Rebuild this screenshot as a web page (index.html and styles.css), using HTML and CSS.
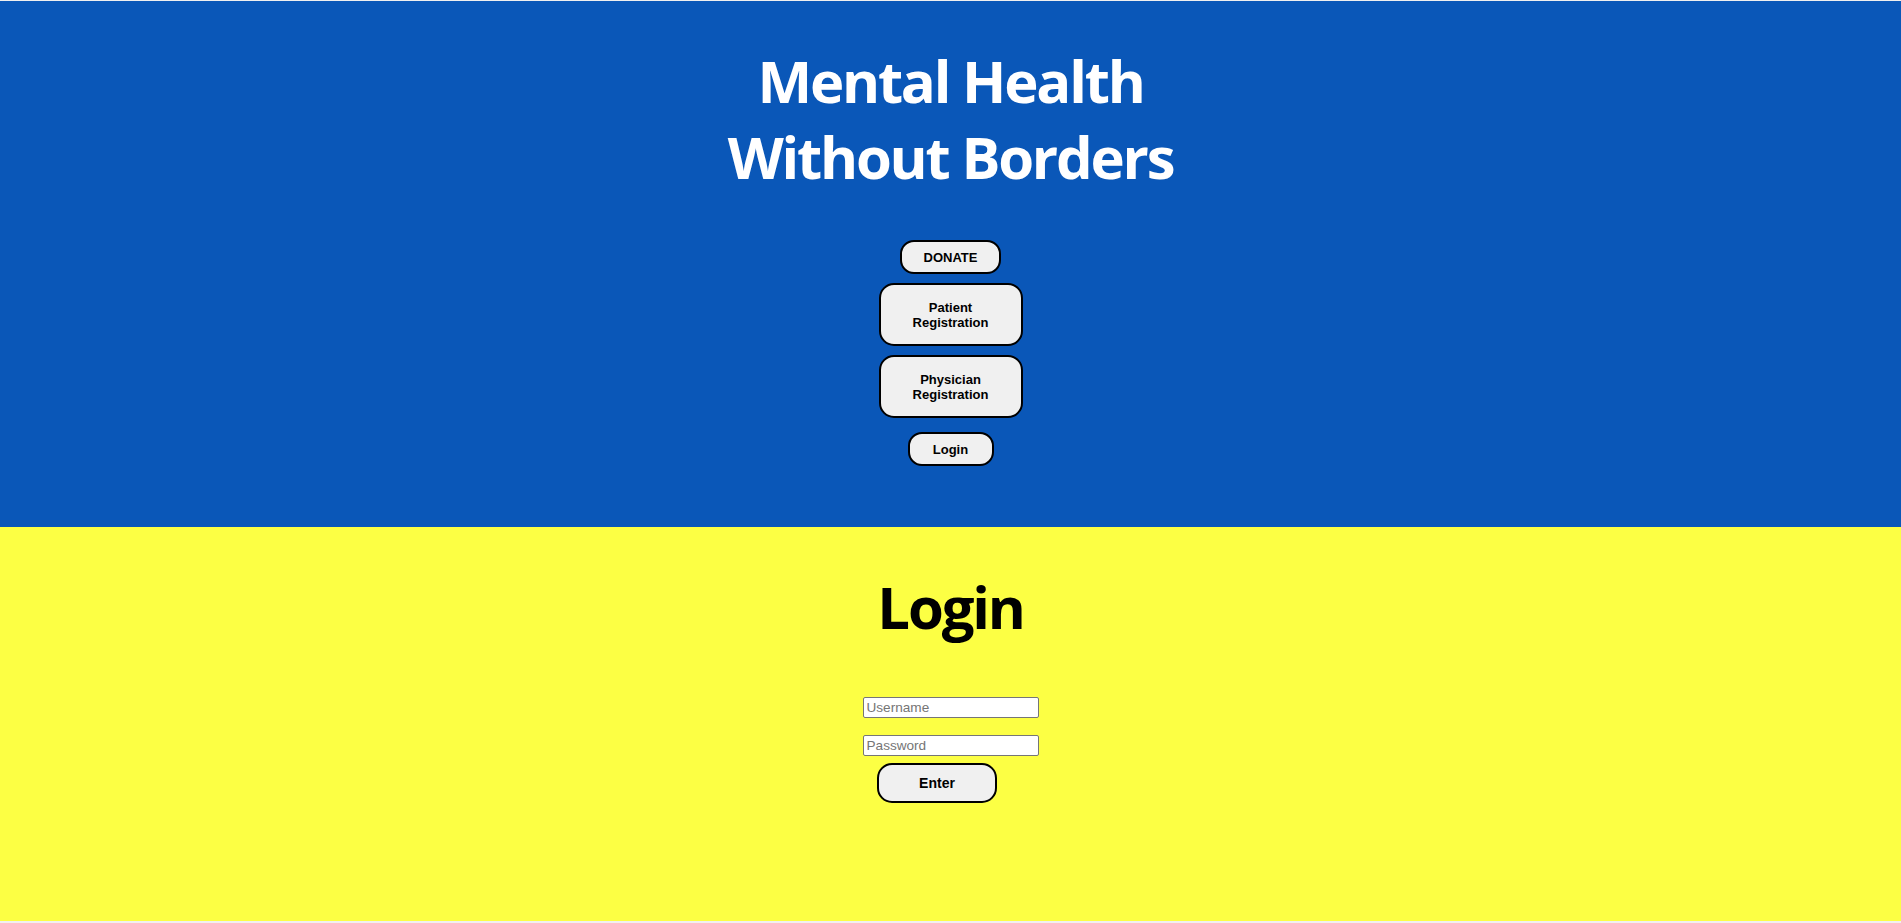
FILE: index.html
```html
<!DOCTYPE html>
<html lang="en">
<head>
<meta charset="utf-8">
<title>Mental Health Without Borders</title>
<link rel="stylesheet" href="styles.css">
</head>
<body>
<header class="hero">
  <h1 class="title">Mental Health<br>Without Borders</h1>
  <nav class="nav">
    <button class="btn btn-small">DONATE</button>
    <button class="btn btn-reg">Patient Registration</button>
    <button class="btn btn-reg">Physician Registration</button>
    <button class="btn btn-small btn-login">Login</button>
  </nav>
</header>
<main class="login">
  <h1 class="title title-dark">Login</h1>
  <form class="form">
    <input class="field" type="text" placeholder="Username">
    <input class="field field-pass" type="password" placeholder="Password">
    <button class="btn btn-enter" type="button">Enter</button>
  </form>
</main>
</body>
</html>
```
FILE: styles.css
```css
html, body {
  margin: 0;
  padding: 0;
}
body {
  background: #f0f0f0;
  padding-top: 1px;
  height: 922px;
  font-family: "Liberation Sans", Arial, sans-serif;
}
.hero {
  background: #0a57b8;
  display: flex;
  flex-direction: column;
  align-items: center;
  padding: 42px 0 61px;
  height: 526px;
  box-sizing: border-box;
}
.title {
  margin: 0;
  font-family: "Open Sans", "Noto Sans", sans-serif;
  font-weight: 700;
  font-size: 58px;
  line-height: 75.5px;
  color: #fff;
  text-align: center;
  letter-spacing: -2.2px;
}
.title-dark {
  color: #000;
}
.nav {
  display: flex;
  flex-direction: column;
  align-items: center;
  margin-top: 46px;
  gap: 9px;
}
.btn {
  font-family: "Liberation Sans", Arial, sans-serif;
  font-weight: 700;
  font-size: 13px;
  line-height: 15px;
  color: #000;
  background: #f0f0f0;
  border: 2px solid #000;
  border-radius: 14px;
  box-sizing: border-box;
  cursor: pointer;
}
.btn-small {
  height: 34px;
  padding: 0 22px;
}
.btn-reg {
  width: 144px;
  height: 63px;
  padding: 0 30px;
  border-radius: 15px;
}
.btn-login {
  margin-top: 5px;
  width: 86px;
  padding: 0;
}
.login {
  background: #fcff44;
  display: flex;
  flex-direction: column;
  align-items: center;
  padding-top: 42px;
  height: 394px;
  box-sizing: border-box;
}
.form {
  display: flex;
  flex-direction: column;
  align-items: center;
  margin-top: 52px;
}
.field {
  width: 176px;
  height: 21px;
  box-sizing: border-box;
  border: 1px solid #767676;
  border-radius: 2px;
  padding: 1px 3px;
  font-family: "Liberation Sans", Arial, sans-serif;
  font-size: 13.6px;
  background: #fff;
  margin: 0;
}
.field::placeholder {
  color: #757575;
}
.field-pass {
  margin-top: 17px;
}
.btn-enter {
  margin-top: 7px;
  margin-right: 27px;
  font-size: 14px;
  line-height: 16px;
  width: 120px;
  height: 40px;
  padding: 0;
  border-radius: 15px;
}
```
